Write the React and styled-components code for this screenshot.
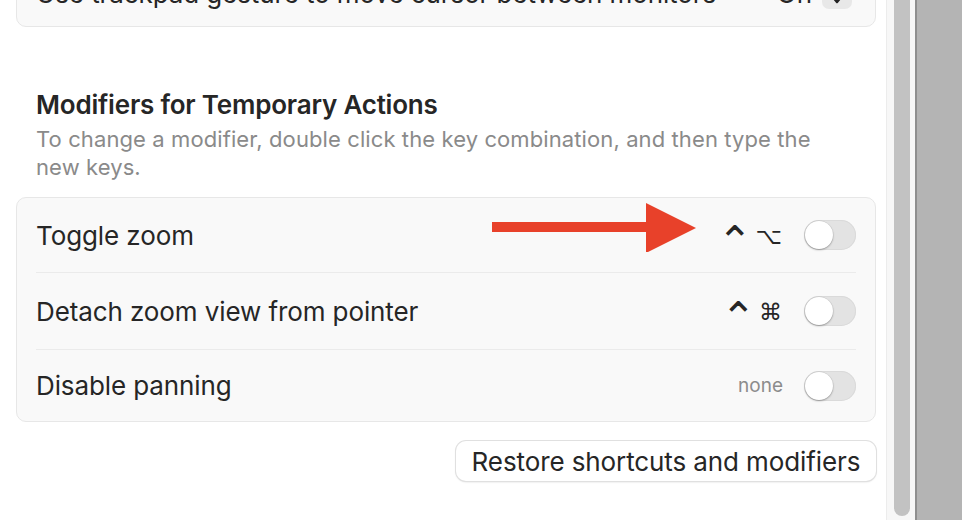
import React from "react";
import styled, { createGlobalStyle } from "styled-components";

const Global = createGlobalStyle`
  html, body { margin: 0; padding: 0; }
  body {
    width: 962px; height: 520px; overflow: hidden;
    background: #ffffff;
    font-family: Inter, "Noto Sans", "DejaVu Sans", sans-serif;
    -webkit-font-smoothing: antialiased;
  }
`;

const Window = styled.div`
  display: flex;
  width: 962px;
  height: 520px;
  overflow: hidden;
`;

const Pane = styled.div`
  width: 886px;
  flex: none;
  background: #ffffff;
  overflow: hidden;
`;

const Content = styled.div`
  margin-top: -41px;
  padding: 0 10px 0 16px;
  display: flex;
  flex-direction: column;
`;

const Card = styled.div`
  position: relative;
  background: #f9f9f9;
  border: 1px solid #e7e7e7;
  border-radius: 10px;
  padding: 0 19px;
`;

const Row = styled.div`
  display: flex;
  align-items: center;
  height: ${(p) => p.$h || 75}px;
  border-top: ${(p) => (p.$first ? "none" : "1.5px solid #ebebeb")};
  box-sizing: border-box;
`;

const Label = styled.div`
  flex: 1;
  font-size: 26px;
  color: #262626;
  letter-spacing: -0.1px;
  white-space: nowrap;
`;

const Keys = styled.div`
  display: flex;
  align-items: center;
  height: 30px;
  gap: 3px;
  font-family: "DejaVu Sans", sans-serif;
  color: #262626;
  margin-right: 22px;
`;

const Caret = styled.span`
  font-size: 42px;
  line-height: 1;
  position: relative;
  top: 7px;
`;

const Mod = styled.span`
  font-size: 23px;
  line-height: 1;
  position: relative;
  top: 1px;
`;

const NoneValue = styled.div`
  font-size: 19px;
  color: #8c8c8c;
  margin-right: 21px;
`;

const Toggle = styled.div`
  width: 52px;
  height: 30px;
  border-radius: 15px;
  background: #e3e3e3;
  box-shadow: inset 0 0 0 1px #dadada;
  display: flex;
  align-items: center;
  padding: 1px;
  box-sizing: border-box;
`;

const Knob = styled.div`
  width: 28px;
  height: 28px;
  border-radius: 50%;
  background: #ffffff;
  box-shadow: 0 1px 2px rgba(0, 0, 0, 0.3), 0 0 0 0.5px rgba(0, 0, 0, 0.08);
`;

const OnValue = styled.div`
  font-size: 26px;
  color: #262626;
  margin-right: 10px;
`;

const Stepper = styled.div`
  width: 30px;
  height: 40px;
  border-radius: 7px;
  background: #e8e8e8;
  display: flex;
  align-items: flex-end;
  justify-content: center;
  margin-right: 4px;
  margin-top: -8px;
`;

const Section = styled.div`
  padding: 0 20px;
  margin-top: 62px;
  margin-bottom: 16px;
`;

const Title = styled.div`
  font-size: 26px;
  font-weight: 600;
  color: #262626;
  letter-spacing: -0.2px;
  line-height: 32px;
`;

const Desc = styled.div`
  font-size: 22px;
  color: #8a8a8a;
  line-height: 28px;
  margin-top: 4px;
  letter-spacing: 0.1px;
`;

const Footer = styled.div`
  display: flex;
  justify-content: flex-end;
  margin-top: 19px;
`;

const Button = styled.button`
  height: 40px;
  width: 420px;
  border-radius: 10px;
  border: none;
  background: #ffffff;
  box-shadow: 0 0 0 1px #e0e0e0, 0 1px 2px rgba(0, 0, 0, 0.18);
  font-family: Inter, sans-serif;
  font-size: 26px;
  color: #262626;
  padding: 0;
  letter-spacing: -0.1px;
`;

const Track = styled.div`
  width: 29px;
  flex: none;
  background: #f7f7f7;
  border-left: 1px solid #ececec;
  box-sizing: border-box;
  display: flex;
  justify-content: center;
  padding-left: 1px;
`;

const Thumb = styled.div`
  width: 16px;
  height: 516px;
  background: #c2c2c2;
  border-radius: 0 0 8px 8px;
`;

const Edge = styled.div`
  width: 2px;
  flex: none;
  background: #8f8f8f;
`;

const Desktop = styled.div`
  flex: 1;
  background: #b4b4b4;
`;

const ArrowMark = styled.svg`
  position: absolute;
  left: 474px;
  top: 2px;
  width: 206px;
  height: 52px;
`;

const Arrow = () => (
  <ArrowMark viewBox="0 0 206 52">
    <rect x="1" y="22" width="157" height="10" fill="#E8412A" />
    <polygon points="155,3 205,28 155,53" fill="#E8412A" />
  </ArrowMark>
);

const Chevron = () => (
  <svg width="12" height="10" viewBox="0 0 12 10" style={{ marginBottom: 4 }}>
    <path d="M2 2 L6 7 L10 2" fill="none" stroke="#222" strokeWidth="2.5" strokeLinecap="round" strokeLinejoin="round" />
  </svg>
);

const rows = [
  { label: "Toggle zoom", mod: "⌥", h: 74 },
  { label: "Detach zoom view from pointer", mod: "⌘", h: 77 },
  { label: "Disable panning", none: true, h: 72 },
];

export default function App() {
  return (
    <>
      <Global />
      <Window>
        <Pane>
          <Content>
            <Card>
              <Row $first $h={66}>
                <Label>Use trackpad gesture to move cursor between monitors</Label>
                <OnValue>On</OnValue>
                <Stepper>
                  <Chevron />
                </Stepper>
              </Row>
            </Card>
            <Section>
              <Title>Modifiers for Temporary Actions</Title>
              <Desc>
                To change a modifier, double click the key combination, and then type the new keys.
              </Desc>
            </Section>
            <Card>
              {rows.map((r, i) => (
                <Row key={r.label} $first={i === 0} $h={r.h}>
                  <Label>{r.label}</Label>
                  {r.none ? (
                    <NoneValue>none</NoneValue>
                  ) : (
                    <Keys>
                      <Caret>⌃</Caret>
                      <Mod>{r.mod}</Mod>
                    </Keys>
                  )}
                  <Toggle>
                    <Knob />
                  </Toggle>
                </Row>
              ))}
              <Arrow />
            </Card>
            <Footer>
              <Button>Restore shortcuts and modifiers</Button>
            </Footer>
          </Content>
        </Pane>
        <Track>
          <Thumb />
        </Track>
        <Edge />
        <Desktop />
      </Window>
    </>
  );
}
